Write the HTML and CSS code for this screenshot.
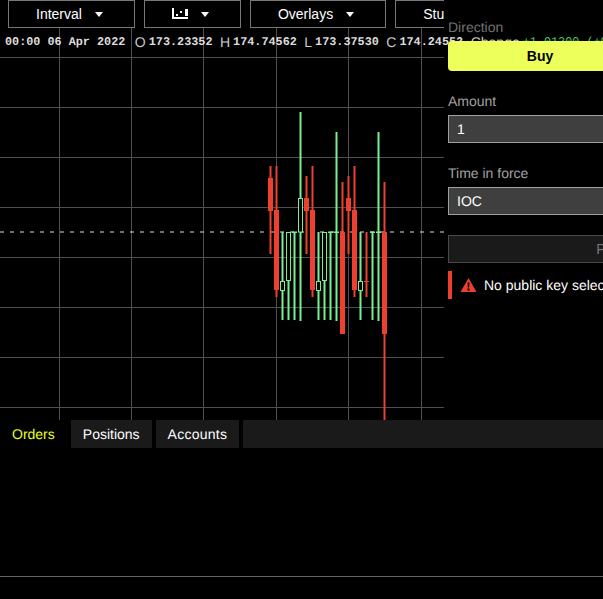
FILE: index.html
```html
<!DOCTYPE html>
<html lang="en">
<head>
    <meta charset="UTF-8">
    <meta name="viewport" content="width=device-width, initial-scale=1.0">
    <title>Trading</title>
    <link rel="stylesheet" href="styles.css">
</head>
<body>

    <div class="main">
        <!-- Chart column -->
        <div class="chart-col">
            <div class="toolbar">
                <button class="tool-btn">Interval <span class="caret-box"><span class="caret"></span></span></button>
                <button class="tool-btn">
                    <svg class="tool-icon" width="16" height="16" viewBox="0 0 16 16" fill="#fff">
                        <rect x="0" y="0" width="2" height="11"/>
                        <rect x="0" y="9" width="16" height="2"/>
                        <rect x="4" y="6" width="2" height="2"/>
                        <rect x="8" y="3" width="2" height="2"/>
                        <rect x="13" y="1" width="3" height="7"/>
                    </svg>
                    <span class="caret-box"><span class="caret"></span></span>
                </button>
                <button class="tool-btn">Overlays <span class="caret-box"><span class="caret"></span></span></button>
                <button class="tool-btn">Studies <span class="caret-box"><span class="caret"></span></span></button>
            </div>

            <div class="chart">
                <svg class="plot" viewBox="0 28 444 392" width="444" height="392">
                    <!-- Grid -->
                    <g class="grid">
                        <line x1="59.5" y1="28" x2="59.5" y2="420"/>
                        <line x1="131.5" y1="28" x2="131.5" y2="420"/>
                        <line x1="203.5" y1="28" x2="203.5" y2="420"/>
                        <line x1="276.5" y1="28" x2="276.5" y2="420"/>
                        <line x1="348.5" y1="28" x2="348.5" y2="420"/>
                        <line x1="421.5" y1="28" x2="421.5" y2="420"/>
                        <line x1="0" y1="57.5" x2="444" y2="57.5"/>
                        <line x1="0" y1="107.5" x2="444" y2="107.5"/>
                        <line x1="0" y1="157.5" x2="444" y2="157.5"/>
                        <line x1="0" y1="207.5" x2="444" y2="207.5"/>
                        <line x1="0" y1="257.5" x2="444" y2="257.5"/>
                        <line x1="0" y1="307.5" x2="444" y2="307.5"/>
                        <line x1="0" y1="357.5" x2="444" y2="357.5"/>
                        <line x1="0" y1="407.5" x2="444" y2="407.5"/>
                    </g>
                    <line class="last-price" x1="0" y1="232" x2="444" y2="232"/>

                    <!-- Down candles -->
                    <g class="down">
                        <line x1="270.5" y1="166" x2="270.5" y2="254"/><rect x="268" y="178" width="5" height="33"/>
                        <line x1="276.5" y1="166" x2="276.5" y2="297"/><rect x="274" y="210" width="5" height="80"/>
                        <line x1="306.5" y1="176" x2="306.5" y2="254"/><rect x="304" y="198" width="5" height="13"/>
                        <line x1="312.5" y1="166" x2="312.5" y2="297"/><rect x="310" y="210" width="5" height="80"/>
                        <line x1="342.5" y1="182" x2="342.5" y2="232"/><rect x="340" y="232" width="5" height="102"/>
                        <line x1="348.5" y1="176" x2="348.5" y2="254"/><rect x="346" y="198" width="5" height="13"/>
                        <line x1="354.5" y1="166" x2="354.5" y2="297"/><rect x="352" y="210" width="5" height="80"/>
                        <line x1="366.5" y1="232" x2="366.5" y2="297"/><rect x="364" y="281" width="5" height="1"/>
                        <line x1="384.5" y1="182" x2="384.5" y2="420"/><rect x="382" y="232" width="5" height="102"/>
                    </g>

                    <!-- Up candles -->
                    <g class="up">
                        <line x1="282.5" y1="232" x2="282.5" y2="320"/><rect x="280.5" y="281.5" width="4" height="9"/>
                        <line x1="288.5" y1="232" x2="288.5" y2="320"/><rect x="286.5" y="232.5" width="4" height="48"/>
                        <line x1="294.5" y1="232" x2="294.5" y2="320"/><rect x="292.5" y="232" width="4" height="0.5"/>
                        <line x1="300.5" y1="112" x2="300.5" y2="321"/><rect x="298.5" y="198.5" width="4" height="33.5"/>
                        <line x1="318.5" y1="232" x2="318.5" y2="320"/><rect x="316.5" y="281.5" width="4" height="9"/>
                        <line x1="324.5" y1="232" x2="324.5" y2="320"/><rect x="322.5" y="232.5" width="4" height="48"/>
                        <line x1="330.5" y1="232" x2="330.5" y2="320"/><rect x="328.5" y="232" width="4" height="0.5"/>
                        <line x1="336.5" y1="132" x2="336.5" y2="321"/><rect x="334.5" y="232" width="4" height="0.5"/>
                        <line x1="360.5" y1="232" x2="360.5" y2="320"/><rect x="358.5" y="281.5" width="4" height="9"/>
                        <line x1="372.5" y1="232" x2="372.5" y2="320"/><rect x="370.5" y="232" width="4" height="0.5"/>
                        <line x1="378.5" y1="132" x2="378.5" y2="321"/><rect x="376.5" y="232" width="4" height="0.5"/>
                    </g>
                </svg>

                <!-- OHLC readout sits over the plot -->
                <div class="readout">
                    <span class="num date">00:00 06 Apr 2022</span>
                    <span class="ohlc">O <span class="num">173.23352</span></span>
                    <span class="ohlc">H <span class="num">174.74562</span></span>
                    <span class="ohlc">L <span class="num">173.37530</span></span>
                    <span class="ohlc">C <span class="num">174.24552</span></span>
                    <span class="ohlc">Change <span class="num change">+1.01200 (+0.58%)</span></span>
                </div>
            </div>
        </div>

        <!-- Order ticket -->
        <div class="ticket">
            <div class="label label-dim">Direction</div>
            <button class="buy-btn">Buy</button>

            <div class="label">Amount</div>
            <div class="field">1</div>

            <div class="label">Time in force</div>
            <div class="field">IOC</div>

            <button class="place-btn">Place order</button>

            <div class="notice">
                <svg class="notice-icon" width="17" height="16" viewBox="0 0 17 16">
                    <path fill-rule="evenodd" fill="#ed3f2e" d="M8.5 1 L16.5 15 L0.5 15 Z M7.5 5.5 L7.8 10.5 L9.2 10.5 L9.5 5.5 Z M7.5 11.5 L7.5 13.5 L9.5 13.5 L9.5 11.5 Z"/>
                </svg>
                No public key selected
            </div>
        </div>
    </div>

    <!-- Tabs -->
    <div class="tabs">
        <a href="#" class="tab tab-active">Orders</a>
        <a href="#" class="tab">Positions</a>
        <a href="#" class="tab tab-wide">Accounts</a>
        <div class="tab-fill"></div>
    </div>

    <div class="tab-body"></div>

</body>
</html>
```

FILE: styles.css
```css
html, body {
    height: 100%;
    overflow: hidden;
}

body {
    font-family: "Liberation Sans", Arial, sans-serif;
    font-size: 14px;
    text-rendering: geometricPrecision;
    background-color: #000;
    color: #fff;
    margin: 0;
    padding: 0;
}

.main {
    display: grid;
    grid-template-columns: 444px 1fr;
    height: 420px;
}

/* Chart */
.chart-col {
    display: flex;
    flex-direction: column;
    min-width: 0;
}

.toolbar {
    display: flex;
    gap: 9px;
    width: 444px;
    height: 28px;
    padding-left: 8px;
    box-sizing: border-box;
    overflow: hidden;
    flex-shrink: 0;
}

.tool-btn {
    display: flex;
    align-items: center;
    gap: 9px;
    flex-shrink: 0;
    height: 28px;
    padding: 0 27px;
    background: #000;
    border: 1px solid #777;
    color: #fff;
    font: inherit;
}

.tool-icon {
    display: block;
    margin-top: 4px;
}

.caret-box {
    display: flex;
    align-items: center;
    justify-content: center;
    width: 16px;
    height: 16px;
}

.caret {
    width: 0;
    height: 0;
    border-left: 4px solid transparent;
    border-right: 4px solid transparent;
    border-top: 5px solid #fff;
}

.chart {
    position: relative;
    flex: 1;
}

.plot {
    display: block;
}

.grid line {
    stroke: #4e4e54;
    stroke-width: 1;
}

.last-price {
    stroke: #e0e0e0;
    stroke-width: 1;
    stroke-dasharray: 4 6;
}

.down line {
    stroke: #ee4030;
    stroke-width: 2;
}

.down rect {
    fill: #ee4030;
}

.up line {
    stroke: #78f090;
    stroke-width: 2;
}

.up rect {
    fill: #000;
    stroke: #78f090;
    stroke-width: 1;
}

.readout {
    position: absolute;
    top: 0;
    left: 5px;
    display: flex;
    align-items: center;
    gap: 7.5px;
    height: 28px;
    white-space: nowrap;
}

.ohlc {
    display: flex;
    align-items: center;
    gap: 3px;
    color: #ccc;
}

.num {
    font-family: "Liberation Mono", "Courier New", monospace;
    font-size: 11.8px;
    font-weight: bold;
    color: #ddd;
}

.date {
    margin-right: 2px;
}

.change {
    color: #4fc86e;
    font-weight: normal;
}

/* Order ticket */
.ticket {
    padding: 18px 0 0 4px;
    min-width: 0;
}

.label {
    height: 18px;
    line-height: 18px;
    color: #a0a0a0;
}

.label-dim {
    height: 23px;
    color: #707070;
}

.buy-btn {
    position: relative;
    display: block;
    width: 184px;
    height: 30px;
    margin-bottom: 21px;
    background-color: #edff5a;
    border: 0;
    border-radius: 4px;
    color: #000;
    font: inherit;
    font-weight: bold;
}

.field {
    box-sizing: border-box;
    width: 368px;
    height: 28px;
    line-height: 26px;
    padding-left: 8px;
    margin: 5px 0 21px;
    background-color: #3f3f3f;
    border: 1px solid #a0a0a0;
}

.place-btn {
    display: block;
    width: 368px;
    height: 28px;
    margin-top: -1px;
    background-color: #1a1a1a;
    border: 1px solid #4a4a4a;
    color: #777;
    font: inherit;
}

.notice {
    display: flex;
    align-items: center;
    gap: 7px;
    width: 368px;
    height: 28px;
    margin-top: 8px;
    padding-left: 8px;
    box-sizing: border-box;
    border-left: 4px solid #ed3f2e;
    white-space: nowrap;
}

/* Tabs */
.tabs {
    display: flex;
    gap: 4px;
    height: 28px;
}

.tab {
    display: block;
    padding: 0 12px;
    line-height: 28px;
    background-color: #1a1a1a;
    color: #fff;
    text-decoration: none;
}

.tab-active {
    background-color: #000;
    color: #edff22;
    margin-right: -4px;
    padding-right: 16px;
}

.tab-wide {
    letter-spacing: 0.25px;
}

.tab-fill {
    flex: 1;
    background-color: #1a1a1a;
}

.tab-body {
    height: 128px;
    border-bottom: 1px solid #63636f;
}
```
